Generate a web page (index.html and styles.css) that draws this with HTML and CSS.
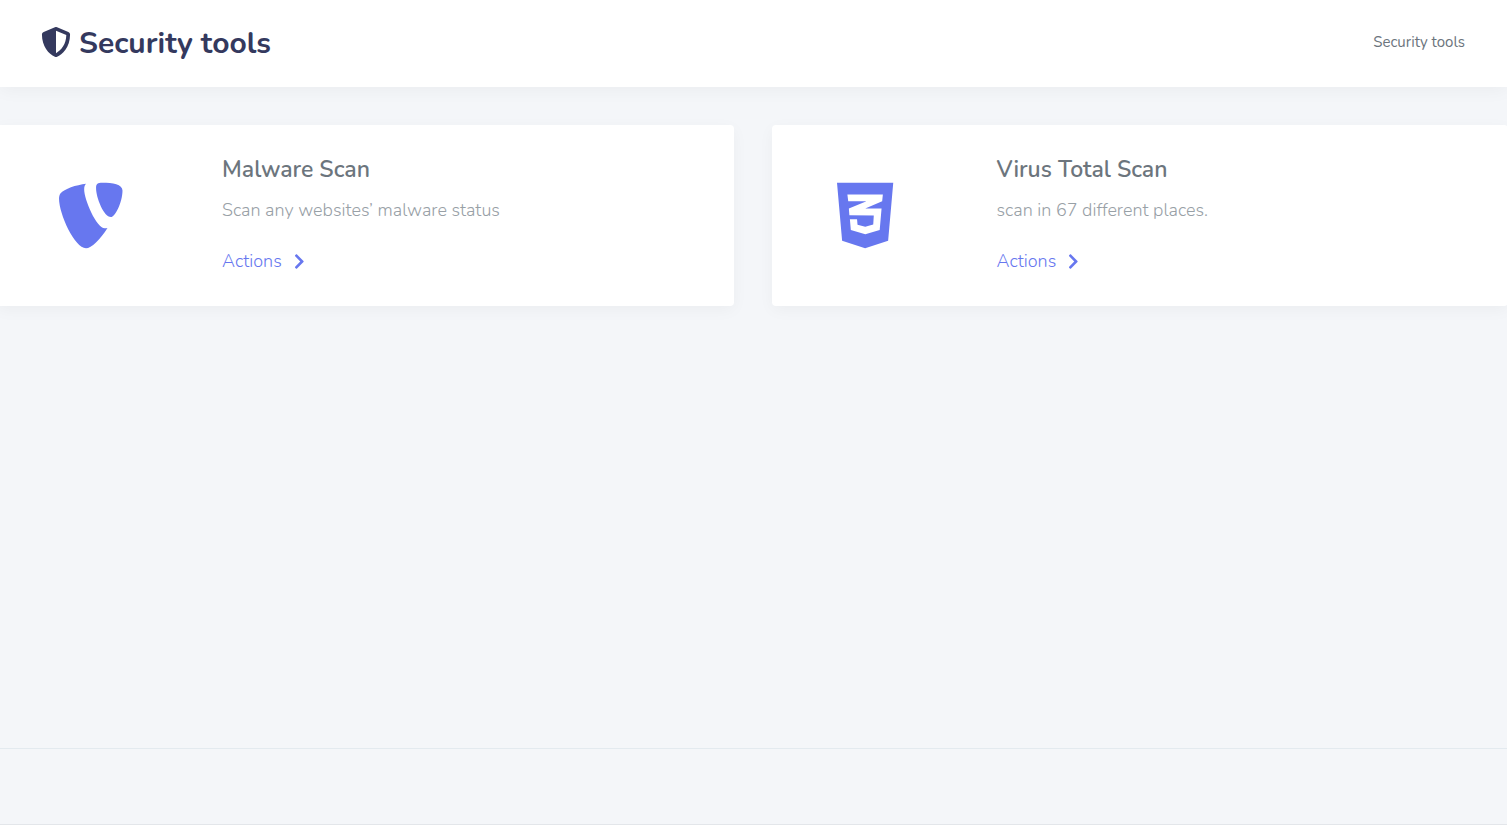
FILE: index.html
```html
<!DOCTYPE html>
<html lang="en">
<head>
<meta charset="utf-8">
<meta name="viewport" content="width=device-width, initial-scale=1">
<title>Security tools</title>
<link rel="stylesheet" href="styles.css">
</head>
<body>
<header class="section-header">
  <h1 class="section-title">
    <svg class="title-icon" viewBox="0 0 512 512" aria-hidden="true"><path d="M466.5 83.7l-192-80a48.15 48.15 0 0 0-36.9 0l-192 80C27.7 91.1 16 108.6 16 128c0 198.5 114.5 335.7 221.5 380.3 11.8 4.9 25.1 4.9 36.9 0C360.1 472.6 496 349.3 496 128c0-19.4-11.7-36.9-29.5-44.3zM256.1 446.3l-.1-381 175.9 73.3c-3.3 151.4-82.1 261.1-175.8 307.7z"/></svg>
    <span>Security tools</span>
  </h1>
  <nav class="breadcrumb" aria-label="Breadcrumb">Security tools</nav>
</header>
<main class="cards">
  <article class="card">
    <div class="card-icon"><svg viewBox="0 0 448 512" aria-hidden="true"><path d="M178.7 78.4c0-24.7 5.4-32.4 13.9-39.4-69.5 8.5-149.3 34-176.3 66.4-5.4 7.7-9.3 20.8-9.3 37.1C7 246 113.8 480 191.1 480c36.3 0 97.3-59.5 146.7-139-7 2.3-11.6 2.3-18.5 2.3-57.2 0-140.6-198.5-140.6-264.9zM301.5 32c-30.1 0-41.7 5.4-41.7 36.3 0 66.4 53.8 198.5 101.7 198.5 26.3 0 78.8-99.7 78.8-182.3 0-40.9-67-52.5-138.8-52.5z"/></svg></div>
    <div class="card-body">
      <h2 class="card-title">Malware Scan</h2>
      <p class="card-text">Scan any websites’ malware status</p>
      <a class="card-link" href="#malware">Actions <svg class="chevron" viewBox="0 0 320 512" aria-hidden="true"><path d="M285.476 272.971L91.132 467.314c-9.373 9.373-24.569 9.373-33.941 0l-22.667-22.667c-9.357-9.357-9.375-24.522-.04-33.901L188.505 256 34.484 101.255c-9.335-9.379-9.317-24.544.04-33.901l22.667-22.667c9.373-9.373 24.569-9.373 33.941 0L285.475 239.03c9.373 9.372 9.373 24.568.001 33.941z"/></svg></a>
    </div>
  </article>
  <article class="card">
    <div class="card-icon"><svg viewBox="0 0 384 512" aria-hidden="true"><path d="M0 32l34.9 395.8L192 480l157.1-52.2L384 32H0zm313.1 80l-4.8 47.3L193 208.6l-.3.1h111.5l-12.8 146.6-98.2 28.7-98.8-29.2-6.4-73.9h48.9l3.2 38.3 52.6 13.3 54.7-15.4 3.7-61.6-166.3-.5v-.1l-.2.1-3.6-46.3L193.1 162l6.5-2.7H76.7L70.9 112h242.2z"/></svg></div>
    <div class="card-body">
      <h2 class="card-title">Virus Total Scan</h2>
      <p class="card-text">scan in 67 different places.</p>
      <a class="card-link" href="#virus-total">Actions <svg class="chevron" viewBox="0 0 320 512" aria-hidden="true"><path d="M285.476 272.971L91.132 467.314c-9.373 9.373-24.569 9.373-33.941 0l-22.667-22.667c-9.357-9.357-9.375-24.522-.04-33.901L188.505 256 34.484 101.255c-9.335-9.379-9.317-24.544.04-33.901l22.667-22.667c9.373-9.373 24.569-9.373 33.941 0L285.475 239.03c9.373 9.372 9.373 24.568.001 33.941z"/></svg></a>
    </div>
  </article>
</main>
<footer class="footer"></footer>
</body>
</html>
```
FILE: styles.css
```css
* { box-sizing: border-box; }
body {
  margin: 0;
  min-height: 100vh;
  display: flex;
  flex-direction: column;
  overflow-x: hidden;
  background: #f4f6f9;
  color: #6c757d;
  font-family: Nunito, Lato, sans-serif;
  font-size: 18px;
  font-weight: 300;
  line-height: 28px;
}
svg { display: block; fill: currentColor; }
.section-header {
  display: flex;
  align-items: center;
  justify-content: space-between;
  padding: 24px 42px 23px 41px;
  background: #fff;
  box-shadow: 0 4px 16px rgba(0, 0, 0, 0.04);
}
.section-title {
  display: flex;
  align-items: center;
  gap: 8px;
  margin: 0;
  color: #34395e;
  font-size: 30px;
  line-height: 40px;
  font-weight: 700;
}
.title-icon { width: 30px; height: 30px; margin-bottom: 4px; }
.breadcrumb { font-size: 15px; font-weight: 400; line-height: 24px; margin-bottom: 4px; }
.cards {
  display: grid;
  grid-template-columns: 1fr 1fr;
  gap: 38px;
  margin: 38px -1px 0 -3px;
}
.card {
  display: flex;
  background: #fff;
  border-radius: 4px;
  box-shadow: 0 4px 16px rgba(0, 0, 0, 0.04);
}
.card-icon {
  flex: 0 0 188px;
  display: flex;
  align-items: center;
  justify-content: center;
  color: #6777ef;
}
.card-icon svg { height: 75px; }
.card-body { flex: 1; padding: 31px 37px; }
.card-title { margin: 0 0 12px; font-size: 23px; line-height: 28px; font-weight: 600; }
.card-text { margin: 0 0 23px; color: #98a0a6; line-height: 28px; }
.card-link {
  display: flex;
  width: fit-content;
  align-items: center;
  gap: 12px;
  color: #6777ef;
  text-decoration: none;
}
.chevron { height: 17px; }
.footer {
  margin-top: auto;
  height: 77px;
  border-top: 1px solid #e3eaef;
  border-bottom: 1px solid #e3e6ea;
}
```
